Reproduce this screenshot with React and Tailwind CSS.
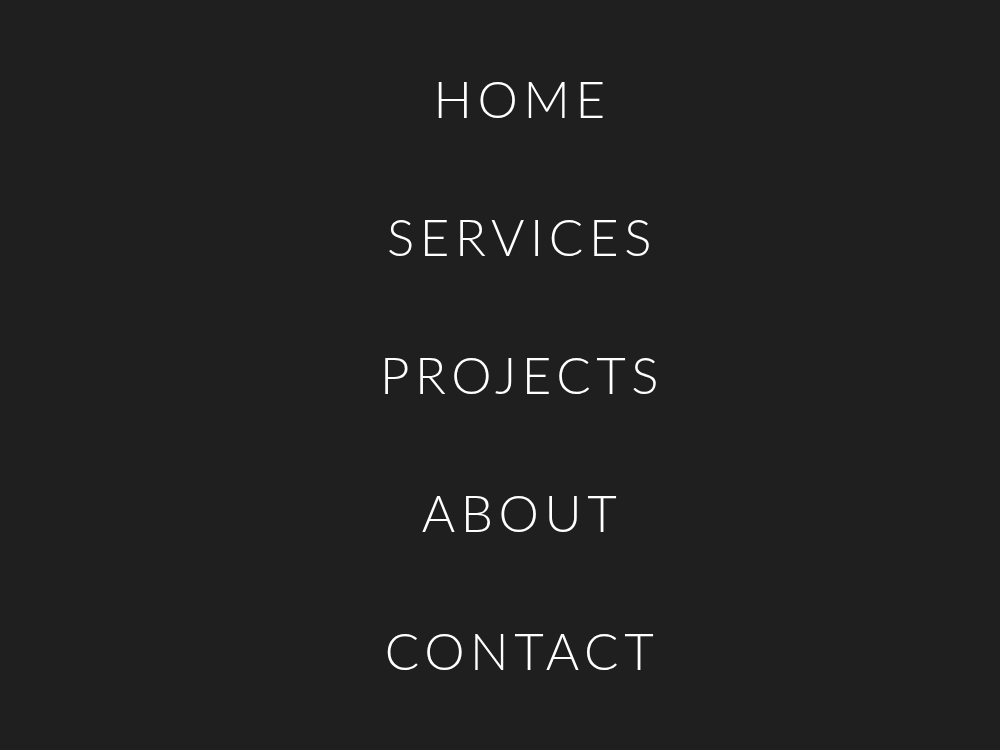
import React from 'react';

const links = ['HOME', 'SERVICES', 'PROJECTS', 'ABOUT', 'CONTACT'];

export default function App() {
  return (
    <div className="min-h-[750px] w-full bg-[#1f1f1f] overflow-hidden">
      <nav className="flex flex-col items-center pt-[30px] pl-[44px]">
        {links.map((l) => (
          <a
            key={l}
            href="#"
            className="block h-[138px] text-white text-[51px] leading-[138px] tracking-[0.11em] font-['Lato',sans-serif] font-light"
          >
            {l}
          </a>
        ))}
      </nav>
    </div>
  );
}
